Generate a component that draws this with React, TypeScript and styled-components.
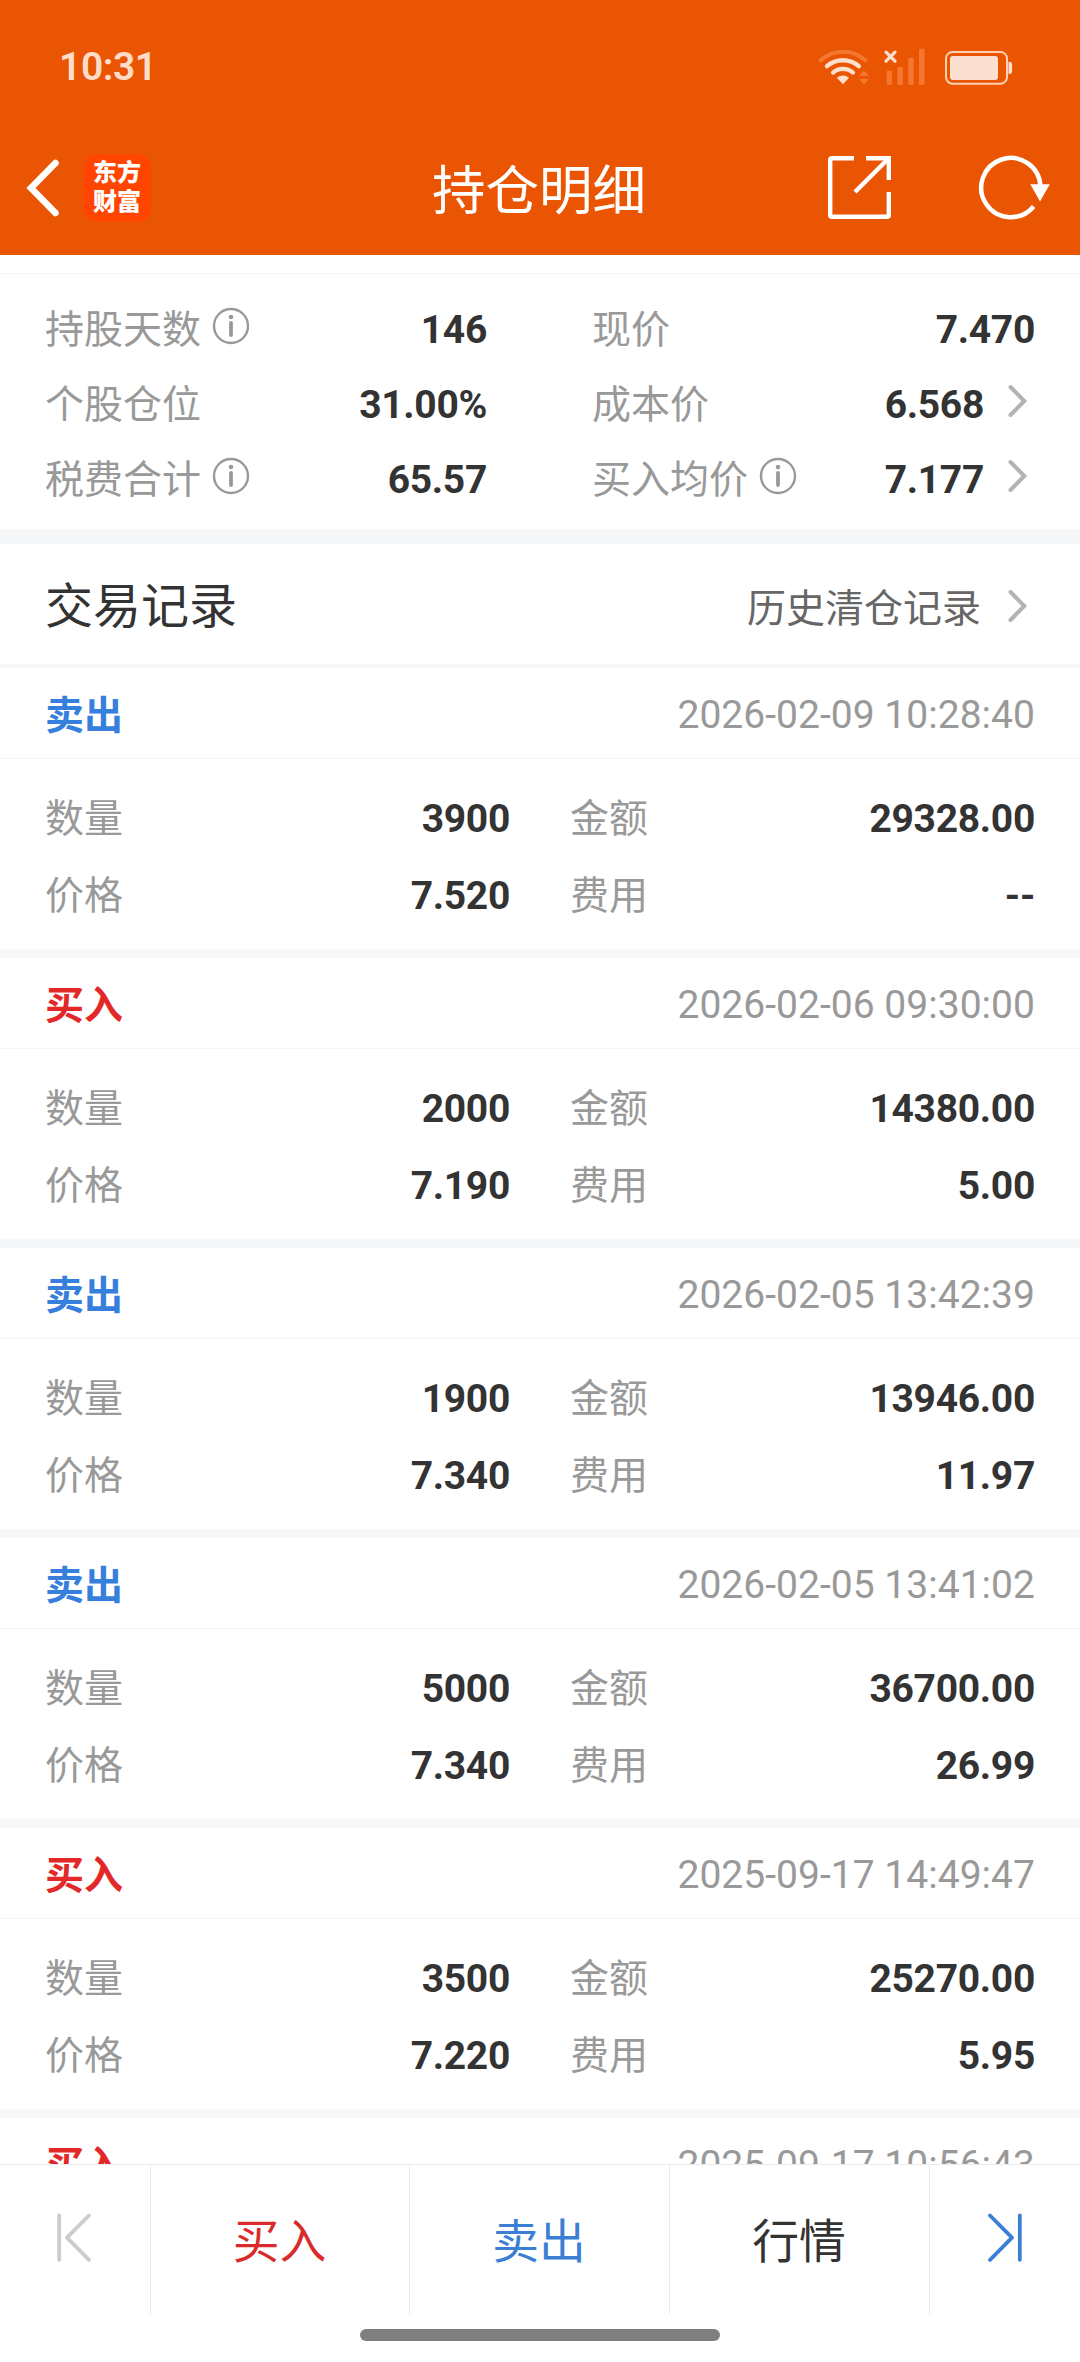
import React from 'react';
import styled, { createGlobalStyle } from 'styled-components';

const GlobalStyle = createGlobalStyle`
  html, body { margin: 0; padding: 0; background: #fff; }
  * { box-sizing: border-box; }
`;

const Screen = styled.div`
  display: flex;
  flex-direction: column;
  width: 1080px;
  height: 2362px;
  overflow: hidden;
  background: #fff;
  color: #333;
  font-family: Roboto, 'Noto Sans CJK SC', sans-serif;
  font-size: 39px;
  line-height: 1;
`;

const Header = styled.header`
  flex: none;
  height: 255px;
  display: flex;
  flex-direction: column;
  background: #ea5504;
`;

const StatusBar = styled.div`
  height: 120px;
  padding: 14px 66px 0 59px;
  display: flex;
  align-items: center;
  justify-content: space-between;
`;

const Clock = styled.span`
  font-size: 39px;
  font-weight: 600;
  letter-spacing: -0.4px;
  color: #ffdcc8;
`;

const TitleBar = styled.div`
  height: 135px;
  display: grid;
  grid-template-columns: 1fr auto 1fr;
  align-items: center;
`;

const TitleLeft = styled.div`
  display: flex;
  align-items: center;
  gap: 22px;
  padding-left: 26px;
`;

const TitleRight = styled.div`
  display: flex;
  align-items: center;
  justify-content: flex-end;
  gap: 86px;
  padding-right: 29px;
`;

const Title = styled.h1`
  margin: 0;
  padding: 9px 2px 0 0;
  font-size: 53.5px;
  font-weight: 400;
  line-height: 60px;
  color: #fff;
`;

const Logo = styled.div`
  width: 68px;
  height: 68px;
  padding-top: 5px;
  border-radius: 14px;
  background: #ff4500;
  color: #fff;
  font-size: 24px;
  font-weight: 900;
  line-height: 29px;
  text-align: center;
`;

const Content = styled.main`
  flex: 1;
  min-height: 0;
  overflow: hidden;
`;

const Summary = styled.section`
  margin-top: 18px;
  padding: 17px 45px 13px;
  border-top: 1px solid #f5f5f7;
  display: grid;
  grid-template-columns: 442px 443px;
  column-gap: 105px;
  grid-auto-rows: 75px;
`;

const Row = styled.div`
  display: flex;
  align-items: center;
  justify-content: space-between;
`;

const Label = styled.span`
  display: flex;
  align-items: center;
  padding-top: 4px;
  color: #999;
`;

const Value = styled.span`
  display: flex;
  align-items: center;
  padding-top: 3px;
  color: #333;
  font-weight: 700;
  letter-spacing: -0.3px;
`;

const Band = styled.div<{ $size: number }>`
  height: ${(p) => p.$size}px;
  background: #f6f7f9;
`;

const SectionHead = styled.div`
  height: 120px;
  padding: 0 45px;
  display: flex;
  align-items: center;
  justify-content: space-between;
`;

const SectionTitle = styled.h2`
  margin: 0;
  padding-top: 5px;
  font-size: 48px;
  font-weight: 400;
`;

const HistoryLink = styled.a`
  display: flex;
  align-items: center;
  gap: 3px;
  padding-top: 11px;
  color: #666;
`;

const RecordHead = styled.div`
  height: 91px;
  padding: 5px 45px 0;
  border-bottom: 1px solid #f5f5f7;
  display: flex;
  align-items: center;
  justify-content: space-between;
`;

const Side = styled.span<{ $color: string }>`
  padding-top: 2px;
  font-weight: 700;
  color: ${(p) => p.$color};
`;

const Time = styled.time`
  color: #999;
  letter-spacing: 0.03px;
`;

const RecordBody = styled.div`
  height: 190px;
  padding: 20px 45px 16px;
  display: grid;
  grid-template-columns: 465px 465px;
  column-gap: 60px;
  grid-auto-rows: 77px;
`;

const BottomBar = styled.nav`
  flex: none;
  height: 198px;
  border-top: 1px solid #ebebeb;
  background: #fff;
`;

const Tabs = styled.div`
  height: 149px;
  display: grid;
  grid-template-columns: 151px 259px 260px 260px 150px;
`;

const Tab = styled.div<{ $color: string; $lift?: number }>`
  display: flex;
  align-items: center;
  justify-content: center;
  padding: 5px 1px ${(p) => p.$lift ?? 0}px 0;
  font-size: 46.8px;
  color: ${(p) => p.$color};
  border-right: 1px solid #ebebeb;
  &:last-child { border-right: none; }
`;

const HomeIndicator = styled.div`
  width: 360px;
  height: 12px;
  margin: 15px auto 0;
  border-radius: 6px;
  background: #7f7f7f;
`;

const Icon = styled.svg`
  display: block;
  flex: none;
`;

const InfoSvg = styled(Icon)`
  margin: 0 0 9px 11px;
`;

const ChevronSvg = styled(Icon)<{ $drop: number }>`
  margin: 0 7px ${(p) => p.$drop}px 23px;
`;

const StatusIcons = () => (
  <Icon width="196" height="38" viewBox="818 48 196 38" fill="none">
    <g strokeLinecap="round" strokeWidth="4">
      <path d="M820.5 60.5 A33.5 33.5 0 0 1 865.5 60.5" stroke="#f4762f" />
      <path d="M827 66.2 A24 24 0 0 1 858.8 66.2" stroke="#fddfce" strokeWidth="4.4" />
      <path d="M833 72.6 A15 15 0 0 1 853 72.6" stroke="#fddfce" strokeWidth="4.2" />
    </g>
    <path d="M836.8 77.8 Q843 73 849 77.8 L843 84.3Z" fill="#fddfce" />
    <path d="M859 76 L864 70.5 L869 76Z M859 79 L869 79 L864 84.5Z" fill="#f4762f" />
    <path d="M886 52.2 L895 61.2 M895 52.2 L886 61.2" stroke="#fddfce" strokeWidth="3.2" strokeLinecap="round" />
    <g fill="#f4762f">
      <rect x="886.7" y="70.7" width="5.4" height="14.3" rx="1.2" />
      <rect x="897.5" y="67" width="5.4" height="18" rx="1.2" />
      <rect x="908.3" y="57.7" width="5.4" height="27.3" rx="1.2" />
      <rect x="919" y="48.8" width="5.6" height="36.2" rx="1.2" />
    </g>
    <rect x="946" y="52" width="61" height="31.7" rx="6.5" stroke="#fdcfae" strokeWidth="2" />
    <rect x="950" y="56" width="48" height="24" rx="3" fill="#fbdfd0" />
    <path d="M1008.5 61.8 h1.2 a2.6 2.6 0 0 1 2.4 2.6 v7 a2.6 2.6 0 0 1 -2.4 2.6 h-1.2Z" fill="#fddfce" />
  </Icon>
);

const BackIcon = () => (
  <Icon width="35" height="60" viewBox="0 0 35 60" fill="none">
    <path d="M29.5 5 L5 30 L29.5 55" stroke="#fff" strokeWidth="6.6" strokeLinecap="round" />
  </Icon>
);

const ShareIcon = () => (
  <Icon width="64" height="64" viewBox="0 0 64 64" fill="none" stroke="#fff" strokeWidth="4.4">
    <path d="M26 2.2 H4 Q2.2 2.2 2.2 4 V59 Q2.2 60.8 4 60.8 H59 Q60.8 60.8 60.8 59 V36" />
    <path d="M38 2.2 H60.8 V24" />
    <path d="M60 3 L27 36" />
  </Icon>
);

const RefreshIcon = () => (
  <Icon width="73" height="66" viewBox="978 154.7 73 66" fill="none">
    <path d="M1033.6 206.2 A29.6 29.6 0 1 1 1040.4 186" stroke="#fff" strokeWidth="4.5" />
    <path d="M1030.3 184 H1049.8 L1040 201.3Z" fill="#fff" />
  </Icon>
);

const Info = () => (
  <InfoSvg width="38" height="38" viewBox="0 0 38 38" fill="none">
    <circle cx="19" cy="19" r="17" stroke="#999" strokeWidth="2.4" />
    <circle cx="19" cy="10" r="2.3" fill="#999" />
    <path d="M19 16 V28" stroke="#999" strokeWidth="3.8" strokeLinecap="round" />
  </InfoSvg>
);

const Chevron = ({ drop = 8 }: { drop?: number }) => (
  <ChevronSvg $drop={drop} width="21" height="34" viewBox="0 0 21 34" fill="none">
    <path d="M3.5 3 L17.3 17 L3.5 31" stroke="#b3b3b3" strokeWidth="4" strokeLinecap="round" />
  </ChevronSvg>
);

const SkipIcon = ({ flip, color }: { flip?: boolean; color: string }) => (
  <Icon width="35" height="49" viewBox="0 0 35 49" fill="none" stroke={color} strokeWidth="3.8" strokeLinecap="round">
    <g transform={flip ? 'translate(35 0) scale(-1 1)' : undefined}>
      <path d="M2.2 2.5 V46.8" />
      <path d="M32 2.5 L10 24.6 L32 46.8" strokeLinejoin="round" />
    </g>
  </Icon>
);

const summary = [
  { label: '持股天数', info: true, value: '146' },
  { label: '现价', value: '7.470' },
  { label: '个股仓位', value: '31.00%' },
  { label: '成本价', value: '6.568', link: true },
  { label: '税费合计', info: true, value: '65.57' },
  { label: '买入均价', info: true, value: '7.177', link: true },
];

const BUY = '#e22828';
const SELL = '#377fdc';

const records = [
  { side: '卖出', time: '2026-02-09 10:28:40', count: '3900', amount: '29328.00', price: '7.520', fee: '--' },
  { side: '买入', time: '2026-02-06 09:30:00', count: '2000', amount: '14380.00', price: '7.190', fee: '5.00' },
  { side: '卖出', time: '2026-02-05 13:42:39', count: '1900', amount: '13946.00', price: '7.340', fee: '11.97' },
  { side: '卖出', time: '2026-02-05 13:41:02', count: '5000', amount: '36700.00', price: '7.340', fee: '26.99' },
  { side: '买入', time: '2025-09-17 14:49:47', count: '3500', amount: '25270.00', price: '7.220', fee: '5.95' },
];

const RecordHeader = ({ side, time }: { side: string; time: string }) => (
  <RecordHead>
    <Side $color={side === '买入' ? BUY : SELL}>{side}</Side>
    <Time>{time}</Time>
  </RecordHead>
);

const Field = ({ label, value }: { label: string; value: string }) => (
  <Row>
    <Label>{label}</Label>
    <Value>{value}</Value>
  </Row>
);

export default function App() {
  return (
    <Screen>
      <GlobalStyle />
      <Header>
        <StatusBar>
          <Clock>10:31</Clock>
          <StatusIcons />
        </StatusBar>
        <TitleBar>
          <TitleLeft>
            <BackIcon />
            <Logo>
              东方
              <br />
              财富
            </Logo>
          </TitleLeft>
          <Title>持仓明细</Title>
          <TitleRight>
            <ShareIcon />
            <RefreshIcon />
          </TitleRight>
        </TitleBar>
      </Header>

      <Content>
        <Summary>
          {summary.map((s) => (
            <Row key={s.label}>
              <Label>
                {s.label}
                {s.info && <Info />}
              </Label>
              <Value>
                {s.value}
                {s.link && <Chevron />}
              </Value>
            </Row>
          ))}
        </Summary>
        <Band $size={15} />
        <SectionHead>
          <SectionTitle>交易记录</SectionTitle>
          <HistoryLink>
            历史清仓记录
            <Chevron />
          </HistoryLink>
        </SectionHead>
        <Band $size={4} />
        {records.map((r) => (
          <React.Fragment key={r.time}>
            <RecordHeader side={r.side} time={r.time} />
            <RecordBody>
              <Field label="数量" value={r.count} />
              <Field label="金额" value={r.amount} />
              <Field label="价格" value={r.price} />
              <Field label="费用" value={r.fee} />
            </RecordBody>
            <Band $size={9} />
          </React.Fragment>
        ))}
        <RecordHeader side="买入" time="2025-09-17 10:56:43" />
      </Content>

      <BottomBar>
        <Tabs>
          <Tab $color="#ccc" $lift={9}>
            <SkipIcon color="#ccc" />
          </Tab>
          <Tab $color="#d92b2b">买入</Tab>
          <Tab $color="#3b7fd4">卖出</Tab>
          <Tab $color="#333">行情</Tab>
          <Tab $color="#3b7fd4" $lift={9}>
            <SkipIcon flip color="#3b7fd4" />
          </Tab>
        </Tabs>
        <HomeIndicator />
      </BottomBar>
    </Screen>
  );
}
